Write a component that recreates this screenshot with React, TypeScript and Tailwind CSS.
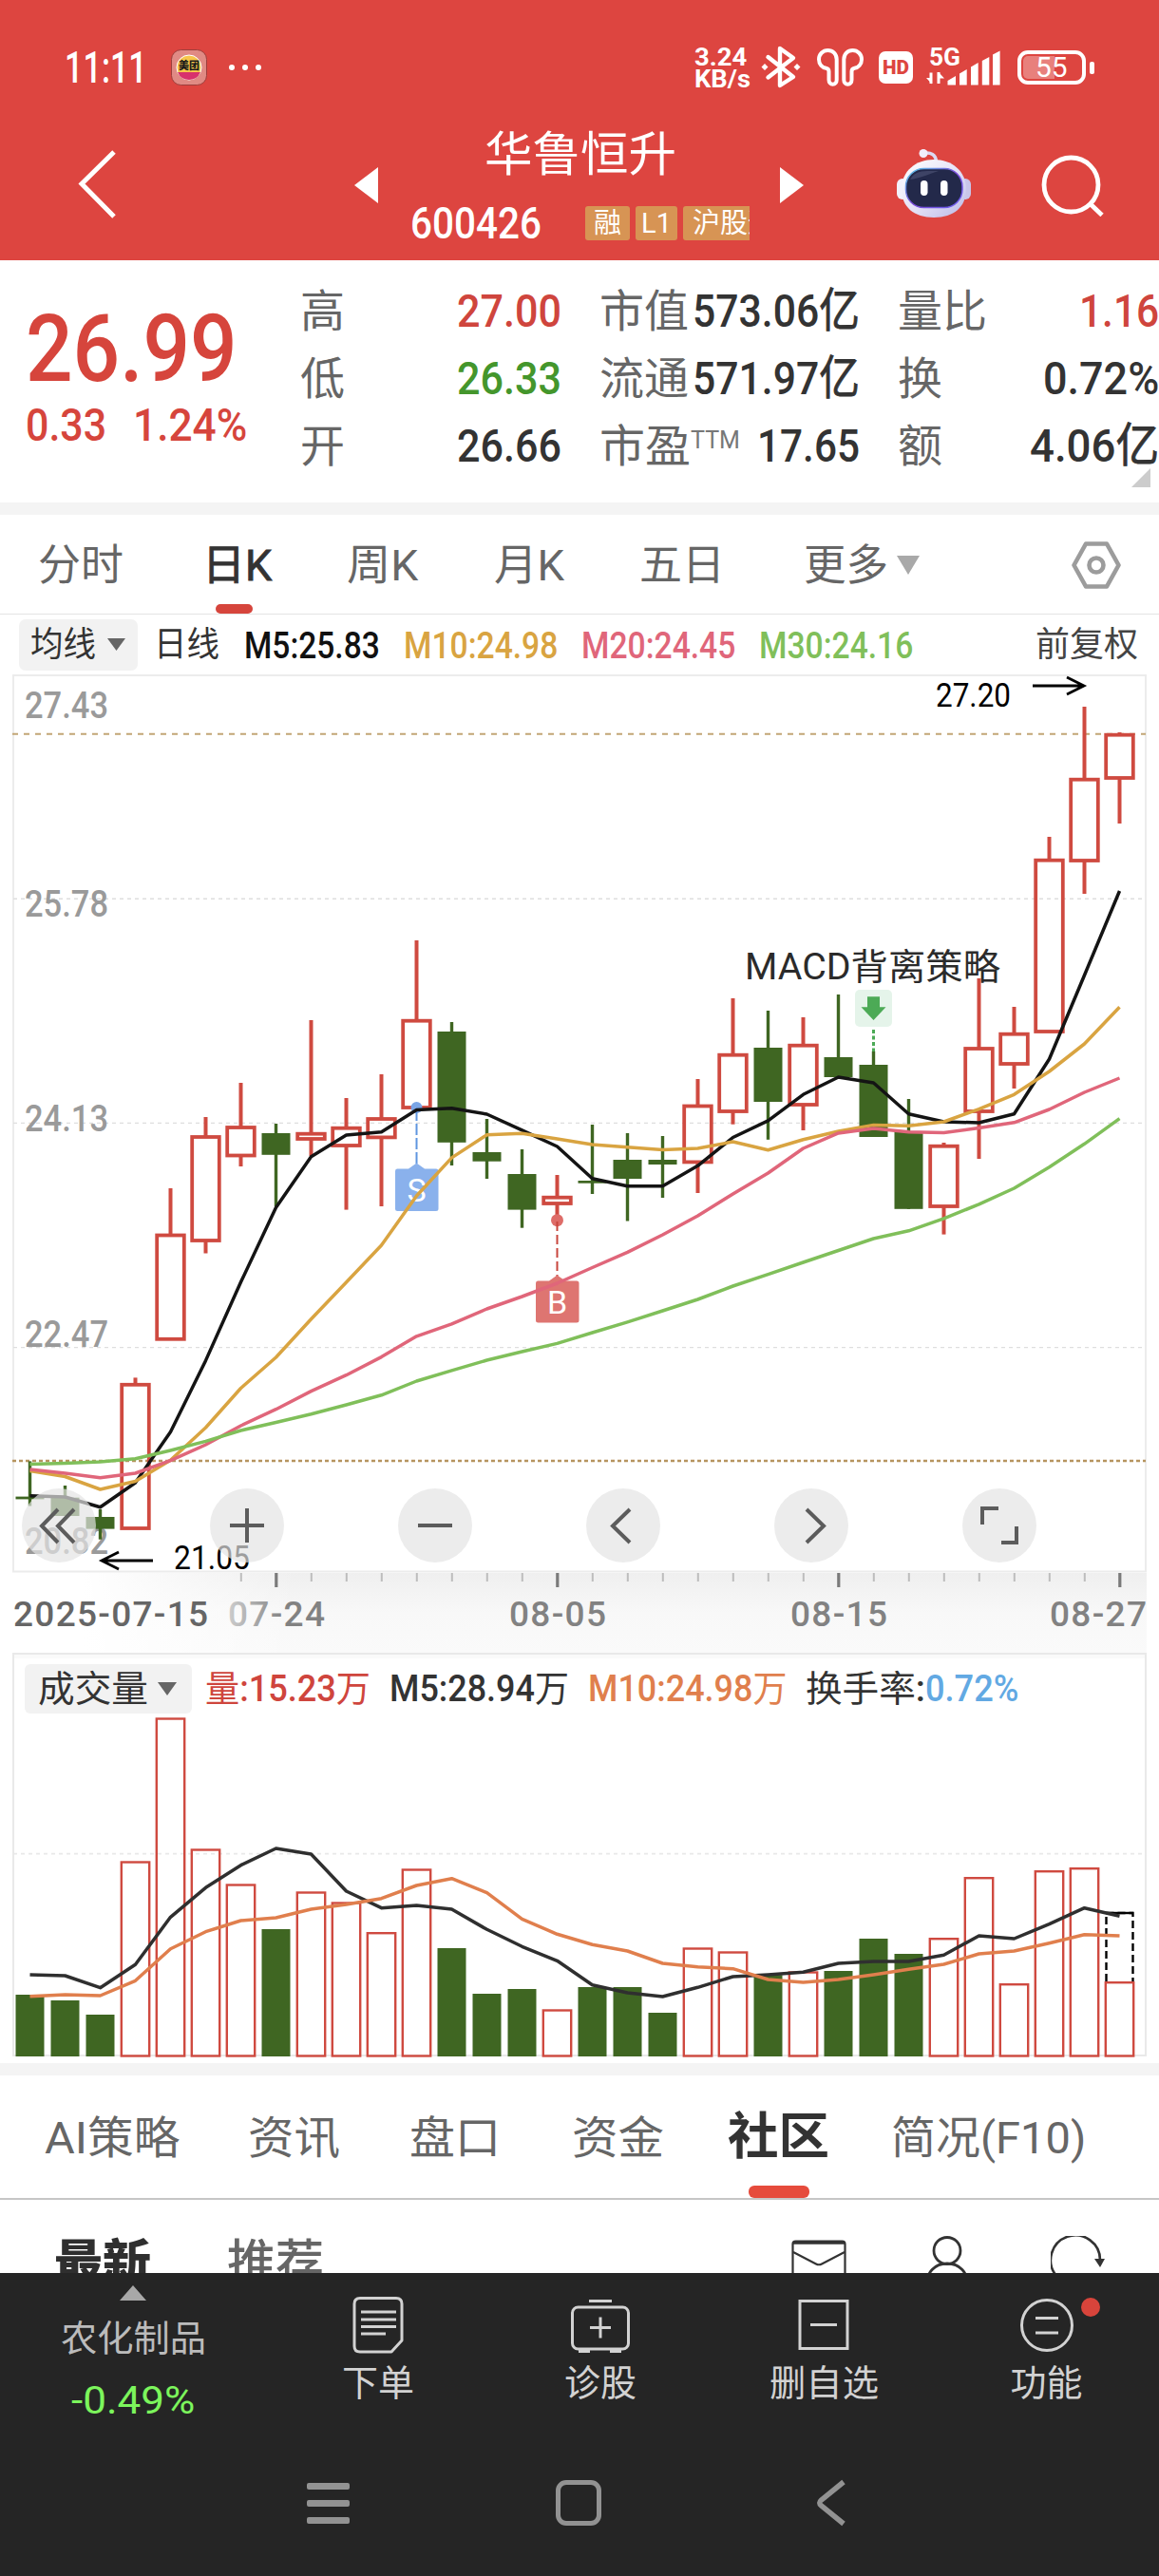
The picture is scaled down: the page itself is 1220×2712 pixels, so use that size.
import { useLayoutEffect, useRef, type ReactNode } from "react";

/** Single line of text condensed or widened to the width of its box. */
function Fit({ className, children }: { className: string; children: ReactNode }) {
  const box = useRef<HTMLSpanElement>(null);
  const inner = useRef<HTMLSpanElement>(null);
  useLayoutEffect(() => {
    const b = box.current;
    const t = inner.current;
    if (b && t && t.offsetWidth > 0) {
      t.style.transform = `scaleX(${b.clientWidth / t.offsetWidth})`;
    }
  }, []);
  return (
    <span ref={box} className={"block shrink-0 whitespace-nowrap leading-none " + className}>
      <span ref={inner} className="inline-block origin-left leading-none">
        {children}
      </span>
    </span>
  );
}

const RED = "#cf4a40";
const GREEN = "#3f6622";
const xAt = (i: number) => 31.5 + 37 * i;

type Candle = ["r" | "g", number, number, number, number];

// kind, high, body top, body bottom, low
const candles: Candle[] = [
  ["g", 1538.4, 1575.6, 1578.4, 1585.5],
  ["g", 1564, 1576.7, 1596, 1596],
  ["g", 1589, 1597, 1609.6, 1620.7],
  ["r", 1450.4, 1455.8, 1611, 1611],
  ["r", 1251, 1298.5, 1411.8, 1411.8],
  ["r", 1176, 1195, 1308, 1319.5],
  ["r", 1140, 1185, 1218.5, 1228],
  ["g", 1183, 1193, 1215.8, 1270],
  ["r", 1074, 1191.7, 1201, 1217],
  ["r", 1156, 1185.7, 1208, 1273.6],
  ["r", 1131, 1176, 1199.4, 1270],
  ["r", 990, 1072.7, 1168, 1168],
  ["g", 1076, 1086, 1202.8, 1227],
  ["g", 1178, 1213, 1222.7, 1241],
  ["g", 1210, 1236, 1273.6, 1292.7],
  ["r", 1237, 1258.7, 1269, 1284],
  ["g", 1184, 1243, 1245.7, 1257],
  ["g", 1193, 1221, 1241, 1285.5],
  ["g", 1196, 1221, 1226, 1261],
  ["r", 1136, 1162.5, 1225.4, 1256],
  ["r", 1051, 1108.7, 1172, 1183.7],
  ["g", 1064, 1103, 1160, 1199.8],
  ["r", 1071, 1098.7, 1165, 1190],
  ["g", 1047, 1113, 1134, 1134],
  ["g", 1106.7, 1121, 1197, 1197],
  ["g", 1157, 1192, 1272.8, 1272.8],
  ["r", 1203, 1204.7, 1272, 1299.6],
  ["r", 1030, 1102, 1172, 1220],
  ["r", 1060, 1086.7, 1122, 1146],
  ["r", 881, 903.7, 1088, 1088],
  ["r", 744, 818.7, 908, 941],
  ["r", 771, 771.7, 821, 867],
];

const ma5 = [1574.8, 1576, 1586.7, 1561, 1507.4, 1432.4, 1349.8, 1271.3, 1217.7, 1195, 1191.7, 1168.4, 1166.8, 1173, 1189.8, 1207, 1240.7, 1248.7, 1248.7, 1227.3, 1197.5, 1179.9, 1152.3, 1134, 1140, 1172.7, 1181, 1182, 1172.7, 1115, 1026.7, 938];
const ma10 = [1548.4, 1554.5, 1568, 1559.5, 1537.3, 1503, 1461.5, 1429, 1388.8, 1350, 1311, 1259, 1218.9, 1194.8, 1193.2, 1199, 1205, 1207.8, 1210.5, 1209, 1202, 1210.8, 1199.8, 1191, 1184.4, 1185.2, 1181, 1167.7, 1152.3, 1128, 1099, 1060.3];
const ma20 = [1547, 1551, 1555.7, 1551, 1537.7, 1521, 1501, 1483.7, 1464.6, 1447.7, 1428.6, 1406.8, 1393.8, 1378, 1365, 1351, 1334.5, 1318.4, 1300, 1280, 1257, 1235, 1209, 1192.9, 1187.9, 1191.7, 1192.5, 1187.5, 1181.8, 1168, 1150, 1135];
const ma30 = [1541.5, 1540.4, 1539, 1535.8, 1527, 1517.4, 1506, 1497.5, 1488.7, 1479, 1468.8, 1454, 1442.8, 1432, 1423, 1414.4, 1403, 1391.9, 1380, 1368, 1354, 1341.7, 1329, 1316.5, 1304, 1295.8, 1282.8, 1267.9, 1251, 1228.8, 1204.3, 1177.6];

const volTops = [2100, 2106, 2121, 1959.3, 1808.3, 1946.3, 1983.3, 2031, 1991.3, 2002.3, 2034, 1967.3, 2051, 2099, 2094, 2115.3, 2092, 2092, 2119, 2050.3, 2054.3, 2079.3, 2075.3, 2075, 2041, 2057, 2040, 1976, 2088, 1969, 1966, 2086];
const vma5 = [2079, 2080, 2092.7, 2068.3, 2018.3, 1987.3, 1963.7, 1946, 1952, 1991, 2008.7, 2006, 2010, 2031.3, 2049.3, 2064.3, 2089.7, 2098, 2102, 2092.3, 2081, 2079, 2076.3, 2067, 2065, 2065, 2058.3, 2038, 2041, 2025.7, 2008.7, 2017.3];
const vma10 = [2101.7, 2100, 2101, 2085.3, 2051.7, 2033.7, 2022, 2019, 2010, 2005, 1998.7, 1985, 1977.7, 1992.7, 2020.3, 2036.3, 2047.3, 2054, 2067, 2070.7, 2072.7, 2084, 2087, 2084, 2079, 2073.3, 2068, 2057, 2054, 2045.7, 2036.7, 2038];

const pts = (ys: number[]) => ys.map((y, i) => `${xAt(i)},${y}`).join(" ");

function Line({ ys, color }: { ys: number[]; color: string }) {
  return <polyline points={pts(ys)} fill="none" stroke={color} strokeWidth="3.5" strokeLinejoin="round" />;
}

function StatusBar() {
  return (
    <div className="flex h-[124px] pt-[46px]">
      <div className="flex h-[50px] items-center pl-[68px] text-white">
        <Fit className="w-[87px] text-[46px] font-medium">11:11</Fit>
        <svg className="ml-[25px] shrink-0" width="38" height="38" viewBox="0 0 38 38">
          <rect x=".5" y=".5" width="37" height="37" rx="10" fill="#e08a84" stroke="#9c3f3c" />
          <circle cx="19" cy="19" r="13" fill="#f7c64c" stroke="#fff" strokeWidth="1" />
          <path d="M7 24a13 13 0 0 0 24 0z" fill="#d8316c" />
          <text x="19" y="21" fontSize="11" fontWeight="900" textAnchor="middle" fill="#1b1b1b">美团</text>
        </svg>
        <div className="ml-[23px] flex gap-[8px]">
          <i className="size-[6px] rounded-full bg-white" />
          <i className="size-[6px] rounded-full bg-white" />
          <i className="size-[6px] rounded-full bg-white" />
        </div>
      </div>
      <div className="ml-auto flex h-[50px] items-center pr-[68px] text-white">
        <div className="flex flex-col">
          <Fit className="h-[24px] w-[55px] text-[26px] font-bold">3.24</Fit>
          <Fit className="h-[25px] w-[59px] text-[25px] font-bold">KB/s</Fit>
        </div>
        <svg className="ml-[11px]" width="42" height="46" viewBox="0 0 42 46" fill="none" stroke="#fff" strokeWidth="4.4" strokeLinejoin="round" strokeLinecap="round">
          <path d="M7.500 12L34 33L20 42V3L34 13L7.500 33.500" />
          <path d="M4 19l3.500 3.500L4 26l-3.500-3.500zM38 19l3.500 3.500L38 26l-3.500-3.500z" fill="#fff" stroke="none" />
        </svg>
        <svg className="ml-[17px]" width="49" height="40" viewBox="0 0 49 40" fill="none" stroke="#fff" strokeWidth="4">
          <path d="M20.700 11.500C20.700 6 16.700 2 11.400 2S2 6.200 2 11.500s3.600 8.600 7.500 9.300c2.200.4 3 1.500 3 3.500V33c0 3 1.700 4.800 4.100 4.800s4.100-1.800 4.100-4.800z" />
          <path d="M28.300 11.500C28.300 6 32.300 2 37.600 2S47 6.200 47 11.500s-3.600 8.600-7.500 9.300c-2.200.4-3 1.500-3 3.500V33c0 3-1.700 4.800-4.100 4.800s-4.100-1.800-4.100-4.800z" />
        </svg>
        <div className="ml-[16px] flex h-[34px] w-[36px] items-center justify-center rounded-[7px] bg-white text-[#dd4540]">
          <Fit className="w-[28px] text-[20px] font-black">HD</Fit>
        </div>
        <svg className="ml-[14px]" width="79" height="58" viewBox="975 42 79 58" fill="#fff">
          <text x="978" y="69" fontSize="25" fontWeight="700" textLength="33" lengthAdjust="spacingAndGlyphs">5G</text>
          <path d="M980 76.500v11.500M988 76v12" stroke="#fff" strokeWidth="3" />
          <path d="M975 82h6v6.500zM994 82.500h-6v-6.500z" />
          <path d="M997.500 85l8.500-5v9.500h-8.500zM1010 77.500l7.700-4.500v16.500h-7.700zM1022 70.500l7.700-4.500v23.500h-7.700zM1033.800 64l7.500-4v29.500h-7.500zM1045 57.500l7.600-4v36h-7.600z" />
        </svg>
        <div className="relative ml-[17px] flex h-[36px] w-[72px] items-center justify-center rounded-[11px] border-[4px] border-white">
          <div className="absolute left-[2px] top-[2px] h-[24px] w-[33px] rounded-l-[5px] bg-[#e8807c]" />
          <Fit className="relative w-[34px] text-[29px]">55</Fit>
        </div>
        <div className="ml-[4px] h-[13px] w-[5px] rounded-[2px] bg-white" />
      </div>
    </div>
  );
}

function Robot() {
  return (
    <svg className="ml-[98px] mt-[32px] shrink-0" width="78" height="74" viewBox="0 0 78 74">
      <defs>
        <linearGradient id="shell" x1="0" y1="0" x2="1" y2="1">
          <stop offset="0" stopColor="#ffffff" />
          <stop offset=".55" stopColor="#e3e0f6" />
          <stop offset="1" stopColor="#b9b8e6" />
        </linearGradient>
        <linearGradient id="rim" x1="0" y1="0" x2="1" y2="1">
          <stop offset="0" stopColor="#58d0e8" />
          <stop offset=".5" stopColor="#7a49d8" />
          <stop offset="1" stopColor="#6b5ef0" />
        </linearGradient>
      </defs>
      <path d="M28 5.500C36 4 41 7 41.500 14" fill="none" stroke="#dcd9f2" strokeWidth="3.500" />
      <circle cx="28" cy="5.500" r="4.500" fill="#f1eefb" />
      <rect x="0" y="32" width="12" height="22" rx="6" fill="#f2f0fb" />
      <rect x="66" y="32" width="12" height="22" rx="6" fill="#c9c5ea" />
      <path d="M39 12C58 12 73 24 73 43S60 73 39 73 5 62 5 43 20 12 39 12z" fill="url(#shell)" />
      <rect x="9.500" y="21.500" width="59.500" height="41" rx="19" fill="#23294a" stroke="url(#rim)" strokeWidth="1.500" />
      <path d="M14 33c3-6 9-9 18-9h12c-10 3-20 8-30 9z" fill="#4a5072" opacity=".7" />
      <rect x="25" y="34" width="7.500" height="16" rx="3.700" fill="#fff" />
      <rect x="46" y="34" width="7.500" height="16" rx="3.700" fill="#fff" />
    </svg>
  );
}

function Header() {
  return (
    <header className="h-[274px] bg-[#dd4540] text-white">
      <StatusBar />
      <div className="flex h-[150px] items-start">
        <svg className="ml-[81px] mt-[33px] shrink-0" width="42" height="74" viewBox="0 0 42 74" fill="none" stroke="#fff" strokeWidth="5">
          <path d="M39 3L5 36.500L39 71" />
        </svg>
        <svg className="ml-[250px] mt-[52px] shrink-0" width="25" height="38" viewBox="0 0 25 38">
          <path d="M25 0v38L0 19z" fill="#fff" />
        </svg>
        <div className="ml-[34px] flex w-[358px] flex-col">
          <Fit className="mx-auto mt-[14px] w-[202px] text-[50px]">华鲁恒升</Fit>
          <div className="mt-[23px] flex h-[48px] items-center">
            <Fit className="w-[138px] text-[46px] font-medium">600426</Fit>
            <div className="ml-[46px] flex h-[36px] w-[173px] gap-[6px] overflow-hidden text-[29px]">
              <span className="flex w-[47px] shrink-0 items-center justify-center rounded-[3px] bg-[#d79454] leading-none">融</span>
              <span className="flex w-[44px] shrink-0 items-center justify-center rounded-[3px] bg-[#d79454] leading-none">L1</span>
              <span className="flex shrink-0 items-center rounded-[3px] bg-[#d79454] px-[10px] leading-none">沪股通</span>
            </div>
          </div>
        </div>
        <svg className="ml-[31px] mt-[52px] shrink-0" width="25" height="38" viewBox="0 0 25 38">
          <path d="M0 0v38L25 19z" fill="#fff" />
        </svg>
        <Robot />
        <svg className="ml-[74px] mt-[38px] shrink-0" width="66" height="66" viewBox="0 0 66 66" fill="none" stroke="#fff" strokeWidth="4.800">
          <circle cx="31.500" cy="32.500" r="28.500" />
          <path d="M52 53l12 11.500" />
        </svg>
      </div>
    </header>
  );
}

function Stat({ label, labelW, value, unit, valueW, tone }: { label: string; labelW: string; value: string; unit?: string; valueW: string; tone: string }) {
  return (
    <div className="flex h-[71px] items-center justify-between">
      <div className="flex items-start">
        <Fit className={"text-[47px] text-[#666] " + labelW}>{label}</Fit>
        {label === "市盈" && <Fit className="mt-[4px] w-[52px] text-[26px] text-[#777]">TTM</Fit>}
      </div>
      <Fit className={"text-[49px] font-medium " + valueW + " " + tone}>
        {value}
        {unit && <span className="font-normal [-webkit-text-stroke:0.8px]">{unit}</span>}
      </Fit>
    </div>
  );
}

function Quote() {
  return (
    <section className="relative flex h-[255px]">
      <div className="w-[316px] pl-[27px] pt-[44px] text-[#d6453c]">
        <Fit className="w-[223px] text-[99px] font-medium">26.99</Fit>
        <div className="mt-[6px] flex font-medium">
          <Fit className="w-[85px] text-[49px]">0.33</Fit>
          <Fit className="ml-[28px] w-[120px] text-[49px]">1.24%</Fit>
        </div>
      </div>
      <div className="w-[275px] pt-[18px]">
        <Stat label="高" labelW="w-[47px]" value="27.00" valueW="w-[110px]" tone="text-[#cf453d]" />
        <Stat label="低" labelW="w-[47px]" value="26.33" valueW="w-[110px]" tone="text-[#44962c]" />
        <Stat label="开" labelW="w-[47px]" value="26.66" valueW="w-[110px]" tone="text-[#333]" />
      </div>
      <div className="ml-[40px] w-[274px] pt-[18px]">
        <Stat label="市值" labelW="w-[94px]" value="573.06" unit="亿" valueW="w-[176px]" tone="text-[#333]" />
        <Stat label="流通" labelW="w-[94px]" value="571.97" unit="亿" valueW="w-[176px]" tone="text-[#333]" />
        <Stat label="市盈" labelW="w-[96px]" value="17.65" valueW="w-[108px]" tone="text-[#333]" />
      </div>
      <div className="ml-[40px] w-[275px] pt-[18px]">
        <Stat label="量比" labelW="w-[94px]" value="1.16" valueW="w-[84px]" tone="text-[#cf453d]" />
        <Stat label="换" labelW="w-[47px]" value="0.72%" valueW="w-[122px]" tone="text-[#333]" />
        <Stat label="额" labelW="w-[47px]" value="4.06" unit="亿" valueW="w-[136px]" tone="text-[#333]" />
      </div>
      <svg className="absolute right-[9px] top-[219px]" width="20" height="20" viewBox="0 0 20 20">
        <path d="M20 0v20H0z" fill="#ccc" />
      </svg>
    </section>
  );
}

function Caret({ className, w, h, color }: { className: string; w: number; h: number; color: string }) {
  return (
    <svg className={"shrink-0 " + className} width={w} height={h} viewBox="0 0 20 14" preserveAspectRatio="none">
      <path d="M0 0h20L10 14z" fill={color} />
    </svg>
  );
}

function PeriodTabs() {
  return (
    <nav className="flex h-[105px] items-center border-b border-[#e4e4e4] pt-[2px] text-[45px] text-[#666]">
      <Fit className="ml-[40px] w-[90px]">分时</Fit>
      <div className="relative ml-[83px] flex h-full items-center">
        <Fit className="w-[73px] text-[#333] [-webkit-text-stroke:0.9px]">日K</Fit>
        <div className="absolute bottom-0 left-[14px] h-[10px] w-[39px] rounded-[5px] bg-[#d6453c]" />
      </div>
      <Fit className="ml-[79px] w-[75px]">周K</Fit>
      <Fit className="ml-[80px] w-[74px]">月K</Fit>
      <Fit className="ml-[79px] w-[90px]">五日</Fit>
      <Fit className="ml-[83px] w-[89px]">更多</Fit>
      <Caret className="ml-[9px]" w={24} h={20} color="#a9a9a9" />
      <svg className="ml-[160px] shrink-0" width="52" height="50" viewBox="0 0 52 50" fill="none" stroke="#9c9c9c" strokeWidth="4.600" strokeLinejoin="round">
        <path d="M15 2.500h22L49.500 25L37 47.500H15L2.500 25z" />
        <circle cx="26" cy="25" r="7.500" />
      </svg>
    </nav>
  );
}

function MaLegend() {
  return (
    <div className="flex h-[63px] items-center text-[38px]">
      <div className="ml-[20px] flex h-[54px] w-[125px] items-center rounded-[7px] bg-[#f2f2f2] pl-[12px] text-[#333]">
        <Fit className="w-[69px] text-[36px]">均线</Fit>
        <Caret className="ml-[12px]" w={19} h={13} color="#666" />
      </div>
      <Fit className="ml-[17px] w-[69px] text-[36px] text-[#333]">日线</Fit>
      <Fit className="ml-[26px] w-[143px] pt-[2px] font-medium text-[#111]">M5:25.83</Fit>
      <Fit className="ml-[25px] w-[162px] pt-[2px] font-medium text-[#d9a441]">M10:24.98</Fit>
      <Fit className="ml-[25px] w-[162px] pt-[2px] font-medium text-[#e0667a]">M20:24.45</Fit>
      <Fit className="ml-[25px] w-[162px] pt-[2px] font-medium text-[#80bf5a]">M30:24.16</Fit>
      <Fit className="ml-[129px] w-[108px] text-[36px] text-[#444]">前复权</Fit>
    </div>
  );
}

const levels: [string, number][] = [
  ["27.43", 756],
  ["25.78", 965],
  ["24.13", 1190.7],
  ["22.47", 1418],
  ["20.82", 1635.6],
];

function CandleShape({ c, x }: { c: Candle; x: number }) {
  const [kind, high, top, bottom, low] = c;
  if (kind === "g") {
    return (
      <g fill={GREEN}>
        <rect x={x - 1.7} y={high} width="3.400" height={low - high} />
        <rect x={x - 15} y={top} width="30" height={bottom - top} />
      </g>
    );
  }
  return (
    <g fill={RED}>
      {top > high && <rect x={x - 2} y={high} width="4" height={top - high + 1} />}
      {low > bottom && <rect x={x - 2} y={bottom - 1} width="4" height={low - bottom + 1} />}
      <rect x={x - 14.3} y={top + 2} width="28.600" height={bottom - top - 4} fill="none" stroke={RED} strokeWidth="3.800" />
    </g>
  );
}

function KLine() {
  const minor = Array.from({ length: 26 }, (_, k) => k + 6).filter((i) => i % 8 !== 7);
  return (
    <svg className="block" width="1220" height="1030" viewBox="0 710 1220 1030">
      <defs>
        <linearGradient id="axis" x1="0" y1="0" x2="0" y2="1">
          <stop offset="0" stopColor="#efefef" />
          <stop offset=".5" stopColor="#f8f8f8" />
          <stop offset="1" stopColor="#fafafa" />
        </linearGradient>
        <linearGradient id="fade" x1="0" y1="0" x2="1" y2="0">
          <stop offset="0" stopColor="#fff" />
          <stop offset=".25" stopColor="#fff" />
          <stop offset="1" stopColor="#fff" stopOpacity="0" />
        </linearGradient>
        <linearGradient id="dateFade" gradientUnits="userSpaceOnUse" x1="238" y1="0" x2="300" y2="0">
          <stop offset="0" stopColor="#cfcfcf" />
          <stop offset="1" stopColor="#828282" />
        </linearGradient>
      </defs>
      <rect x="15" y="1656" width="1192" height="84" fill="url(#axis)" />
      <rect x="13" y="1655" width="300" height="85" fill="url(#fade)" />
      <path d="M14 1655V711H1206V1655M13 1654.500H1207" fill="none" stroke="#ececec" strokeWidth="2" />
      <path d="M14 946.300H1206M14 1182.400H1206M14 1418.600H1206" stroke="#dedede" strokeWidth="1.400" strokeDasharray="4 4" />
      <g fill="#9a9a9a" fontSize="38" fontWeight="500">
        {levels.map(([t, y]) => (
          <text key={t} x="26" y={y} textLength="88" lengthAdjust="spacingAndGlyphs">{t}</text>
        ))}
      </g>
      <path d="M13 772.700H1206" stroke="#c2a676" strokeWidth="2" strokeDasharray="6 6" />
      <path d="M13 1538H1206" stroke="#b6945f" strokeWidth="2.400" strokeDasharray="4 3" />

      {candles.map((c, i) => (
        <CandleShape key={i} c={c} x={xAt(i)} />
      ))}

      <circle cx="438.500" cy="1166" r="6" fill="#7aa5e6" />
      <path d="M438.500 1168V1226" stroke="#5f95e0" strokeWidth="2" strokeDasharray="12 3" />
      <path d="M418 1230.500h12l8.500-6 8.500 6h12q2.500 0 2.500 2.500v39.500q0 2.500-2.500 2.500H418.500q-2.500 0-2.500-2.500v-39.500q0-2.500 2-2.500z" fill="#8ab1ec" />
      <text x="438.700" y="1265" fontSize="34" textAnchor="middle" fill="#fff">S</text>
      <circle cx="586.500" cy="1284.700" r="6.500" fill="#de6c68" />
      <path d="M586.500 1286V1344" stroke="#c8453d" strokeWidth="2" strokeDasharray="10 4" />

      <Line ys={ma5} color="#141414" />
      <path d="M566 1348.500h12l8.500-6 8.500 6h12q2.500 0 2.500 2.500v39q0 2.500-2.500 2.500H566.500q-2.500 0-2.500-2.500v-39q0-2.500 2-2.500z" fill="#de7571" />
      <text x="586.700" y="1383" fontSize="34" textAnchor="middle" fill="#fff">B</text>
      <Line ys={ma10} color="#d9a441" />
      <Line ys={ma20} color="#e0667a" />
      <Line ys={ma30} color="#80bf5a" />

      <text x="784" y="1031" fontSize="38" fill="#2b2b2b" textLength="269" lengthAdjust="spacingAndGlyphs">MACD背离策略</text>
      <rect x="900" y="1042" width="39" height="39" rx="5" fill="#e5f4ea" />
      <path d="M913 1049.300h13v11h6.500l-13 13.700-13-13.700h6.500z" fill="#4caa56" />
      <path d="M919.500 1084v23" stroke="#4caa56" strokeWidth="3" strokeDasharray="4 2.500" />

      <g fill="#000" fontSize="35">
        <text x="985" y="744" textLength="79" lengthAdjust="spacingAndGlyphs">27.20</text>
        <text x="183" y="1652" textLength="80" lengthAdjust="spacingAndGlyphs">21.05</text>
      </g>
      <path d="M1087 722H1141M1123 713l18 9-18 9M161 1643H107M125 1634l-18 9 18 9" fill="none" stroke="#000" strokeWidth="2.800" />

      {minor.map((i) => (
        <path key={i} d={`M${xAt(i) + 0.3} 1656v9`} stroke="#bdbdbd" strokeWidth="2" />
      ))}
      {[7, 15, 23, 31].map((i) => (
        <path key={i} d={`M${xAt(i) + 0.3} 1656v15`} stroke="#7a7a7a" strokeWidth="3.200" />
      ))}
      <g fontSize="37" fontWeight="500" fill="#828282">
        <text x="14" y="1711.500" fill="#666" textLength="205" lengthAdjust="spacing">2025-07-15</text>
        <text x="240" y="1711.500" fill="url(#dateFade)" textLength="102" lengthAdjust="spacing">07-24</text>
        <text x="536" y="1711.500" textLength="102" lengthAdjust="spacing">08-05</text>
        <text x="832" y="1711.500" textLength="102" lengthAdjust="spacing">08-15</text>
        <text x="1105" y="1711.500" textLength="102" lengthAdjust="spacing">08-27</text>
      </g>
    </svg>
  );
}

function RoundButton({ d }: { d: string }) {
  return (
    <button className="flex size-[78px] items-center justify-center rounded-full bg-[rgba(227,227,227,0.69)]">
      <svg width="78" height="78" viewBox="-39 -39 78 78" fill="none" stroke="#5c5c5c" strokeWidth="4">
        <path d={d} />
      </svg>
    </button>
  );
}

function ChartButtons() {
  return (
    <div className="absolute left-[23px] top-[857px] flex gap-[120px]">
      <RoundButton d="M-1 -17L-18 0.500L-1 18M16 -17L-1 0.500L16 18" />
      <RoundButton d="M-18 0H18M0 -18V18" />
      <RoundButton d="M-18 0H18" />
      <RoundButton d="M7 -17L-11 0.500L7 18" />
      <RoundButton d="M-5 -17L13 0.500L-5 18" />
      <RoundButton d="M-18 -1V-18H-1M2 18H18V1" />
    </div>
  );
}

function Volume() {
  return (
    <section className="relative h-[432px]">
      <svg className="absolute inset-0" width="1220" height="432" viewBox="0 1740 1220 432">
        <rect x="15" y="1741" width="1192" height="5" fill="#fafafa" />
        <path d="M14 2164V1741H1206V2164z" fill="none" stroke="#e9e9e9" strokeWidth="2" />
        <path d="M14 1951.700H1206" stroke="#e8e8e8" strokeWidth="1.800" strokeDasharray="4 4" />
        {volTops.map((top, i) =>
          candles[i][0] === "g" ? (
            <rect key={i} x={xAt(i) - 15} y={top} width="30" height={2165 - top} fill={GREEN} />
          ) : (
            <rect key={i} x={xAt(i) - 14.7} y={top + 1.200} width="29.400" height={2164.5 - top - 1.2} fill="none" stroke={RED} strokeWidth="2.400" />
          )
        )}
        <path d="M1164.500 2086V2014H1192.500V2086" fill="none" stroke="#000" strokeWidth="2.400" strokeDasharray="8 4" />
        <path d="M1164 2014H1193" stroke="#000" strokeWidth="2.400" />
        <Line ys={vma5} color="#2f2f2f" />
        <Line ys={vma10} color="#e07f4d" />
      </svg>
      <div className="relative flex items-center pt-[12px] text-[38px]">
        <div className="ml-[26px] flex h-[52px] w-[176px] items-center rounded-[6px] bg-[#f2f2f2] pl-[14px] text-[#333]">
          <Fit className="w-[116px]">成交量</Fit>
          <Caret className="ml-[10px]" w={20} h={14} color="#666" />
        </div>
        <Fit className="ml-[14px] w-[174px] text-[#cf453d]">量<b className="font-medium">:15.23</b>万</Fit>
        <Fit className="ml-[20px] w-[189px] text-[#333]"><b className="font-medium">M5:28.94</b>万</Fit>
        <Fit className="ml-[20px] w-[209px] text-[#e07f4d]"><b className="font-medium">M10:24.98</b>万</Fit>
        <Fit className="ml-[20px] w-[126px] text-[#333]">换手率<b className="font-medium">:</b></Fit>
        <Fit className="w-[98px] font-medium text-[#62a9e3]">0.72%</Fit>
      </div>
    </section>
  );
}

function SectionTabs() {
  return (
    <nav className="flex h-[131px] items-center border-b-2 border-[#c6c6c6] pt-[2px] text-[47px] text-[#666]">
      <Fit className="ml-[47px] w-[142px]">AI策略</Fit>
      <Fit className="ml-[72px] w-[97px]">资讯</Fit>
      <Fit className="ml-[73px] w-[96px]">盘口</Fit>
      <Fit className="ml-[75px] w-[97px]">资金</Fit>
      <div className="relative ml-[67px] flex h-full items-center">
        <Fit className="w-[107px] text-[53px] font-bold text-[#333]">社区</Fit>
        <div className="absolute bottom-0 left-[22px] h-[13px] w-[64px] rounded-[6px] bg-[#e64b3c]" />
      </div>
      <Fit className="ml-[65px] w-[205px]">简况(F10)</Fit>
    </nav>
  );
}

function CommunityBar() {
  return (
    <div className="flex h-[77px] items-start overflow-hidden">
      <Fit className="ml-[57px] mt-[41px] w-[102px] text-[51px] font-black text-[#2f2f2f]">最新</Fit>
      <Fit className="ml-[80px] mt-[41px] w-[102px] text-[51px] font-medium text-[#666]">推荐</Fit>
      <svg className="ml-[491px] mt-[41px] shrink-0" width="60" height="50" viewBox="0 0 60 50" fill="none" stroke="#333" strokeWidth="2.200">
        <rect x="2.500" y="2.500" width="55" height="44" rx="3" />
        <path d="M3 4h54" strokeWidth="3.500" />
        <path d="M3 14l24 12.500q3 1.500 6 0L57 14" />
      </svg>
      <svg className="ml-[80px] mt-[36px] shrink-0" width="50" height="60" viewBox="0 0 50 60" fill="none" stroke="#333" strokeWidth="2.800">
        <circle cx="25" cy="17.500" r="14" />
        <path d="M3 56C3 40 12 31 25 31s22 9 22 25" />
      </svg>
      <svg className="ml-[84px] mt-[38px] shrink-0" width="62" height="60" viewBox="0 0 62 60" fill="none" stroke="#333" strokeWidth="2.600">
        <path d="M6 42A26 26 0 1 1 52 26" />
        <path d="M46 24h11l-5 9z" fill="#333" stroke="none" />
      </svg>
    </div>
  );
}

function BottomBar() {
  return (
    <footer className="h-[319px] bg-[#252525] text-[#d2d2d2]">
      <div className="flex h-[190px] text-[38px]">
        <div className="flex w-[280px] flex-col items-center pt-[13px]">
          <svg width="28" height="16" viewBox="0 0 28 16"><path d="M14 0l14 16H0z" fill="#a8a8a8" /></svg>
          <Fit className="mt-[21px] w-[153px] text-[#bbb]">农化制品</Fit>
          <Fit className="mt-[26px] w-[130px] text-[41px] text-[#7cf55c]">-0.49%</Fit>
        </div>
        <div className="flex w-[236px] flex-col items-center pt-[24px]">
          <svg width="54" height="62" viewBox="0 0 54 62" fill="none" stroke="#d2d2d2" strokeWidth="3">
            <path d="M8 2.500h38q6 0 6 6V47L41 59H8q-6 0-6-6V8.500q0-6 6-6z" strokeLinejoin="round" />
            <path d="M9 17h37M9 25h37M9 32.500h37M9 40h26" />
          </svg>
          <Fit className="mt-[11px] w-[76px]">下单</Fit>
        </div>
        <div className="flex w-[232px] flex-col items-center pt-[24px]">
          <svg width="64" height="62" viewBox="0 0 64 62" fill="none" stroke="#d2d2d2" strokeWidth="3">
            <rect x="2.500" y="12" width="59" height="44" rx="6" />
            <path d="M20 5.500h24M9 58.500h12M42 58.500h12" />
            <path d="M32 22.500v22M21 33.500h22" />
          </svg>
          <Fit className="mt-[11px] w-[76px]">诊股</Fit>
        </div>
        <div className="flex w-[238px] flex-col items-center pt-[24px]">
          <svg width="54" height="62" viewBox="0 0 54 62" fill="none" stroke="#d2d2d2" strokeWidth="3">
            <rect x="2" y="5.500" width="50" height="50" />
            <path d="M13 30.500h28" />
          </svg>
          <Fit className="mt-[11px] w-[115px]">删自选</Fit>
        </div>
        <div className="relative flex w-[231px] flex-col items-center pt-[24px]">
          <svg width="58" height="62" viewBox="0 0 58 62" fill="none" stroke="#d2d2d2" strokeWidth="3">
            <circle cx="29" cy="31" r="26.500" />
            <path d="M17 23.500h24M17 39h24" />
          </svg>
          <Fit className="mt-[11px] w-[76px]">功能</Fit>
          <div className="absolute left-[152px] top-[26px] size-[20px] rounded-full bg-[#d8443b]" />
        </div>
      </div>
      <div className="flex items-center pt-[27px]">
        <div className="ml-[323px] flex w-[45px] flex-col gap-[11px]">
          <i className="h-[7px] rounded-[2px] bg-[#929292]" />
          <i className="h-[7px] rounded-[2px] bg-[#929292]" />
          <i className="h-[7px] rounded-[2px] bg-[#929292]" />
        </div>
        <div className="ml-[217px] size-[48px] rounded-[11px] border-[5px] border-[#929292]" />
        <svg className="ml-[225px]" width="34" height="50" viewBox="0 0 34 50" fill="none" stroke="#929292" strokeWidth="5.500">
          <path d="M30 3L6.500 22q-3.500 3 0 6L30 47" />
        </svg>
      </div>
    </footer>
  );
}

export default function App() {
  return (
    <div className="h-[2712px] w-[1220px] overflow-hidden bg-white font-['Roboto','Noto_Sans_CJK_SC',sans-serif]">
      <Header />
      <Quote />
      <div className="h-[13px] bg-[#f4f4f4]" />
      <PeriodTabs />
      <MaLegend />
      <div className="relative">
        <KLine />
        <ChartButtons />
      </div>
      <Volume />
      <div className="h-[13px] bg-[#f4f4f4]" />
      <SectionTabs />
      <CommunityBar />
      <BottomBar />
    </div>
  );
}
